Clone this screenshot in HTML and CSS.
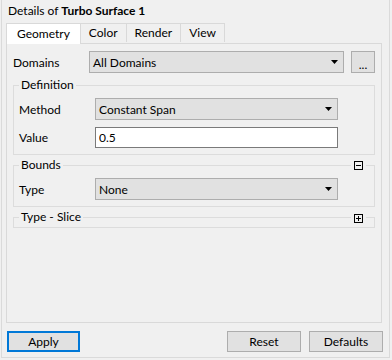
FILE: index.html
```html
<!DOCTYPE html>
<html lang="en">
<head>
    <meta charset="UTF-8">
    <meta name="viewport" content="width=device-width, initial-scale=1.0">
    <title>Details of Turbo Surface 1</title>
    <link rel="stylesheet" href="styles.css">
</head>
<body>
    <div class="details">
        <div class="details-title">Details of <b>Turbo Surface 1</b></div>

        <div class="tabs">
            <div class="tab active">Geometry</div>
            <div class="tab">Color</div>
            <div class="tab">Render</div>
            <div class="tab">View</div>
        </div>

        <div class="tab-pane">
            <div class="row">
                <span class="row-label">Domains</span>
                <div class="combo">
                    <span>All Domains</span>
                    <svg class="arrow" width="7" height="4" viewBox="0 0 7 4"><polygon points="0,0 7,0 3.5,4"/></svg>
                </div>
                <button class="btn-more">...</button>
            </div>

            <fieldset class="group">
                <legend>Definition</legend>
                <div class="row">
                    <span class="row-label">Method</span>
                    <div class="combo">
                        <span>Constant Span</span>
                        <svg class="arrow" width="7" height="4" viewBox="0 0 7 4"><polygon points="0,0 7,0 3.5,4"/></svg>
                    </div>
                </div>
                <div class="row">
                    <span class="row-label">Value</span>
                    <input class="field" type="text" value="0.5">
                </div>
            </fieldset>

            <fieldset class="group">
                <legend>Bounds</legend>
                <span class="group-toggle">
                    <svg width="9" height="9" viewBox="0 0 9 9"><rect x="0.5" y="0.5" width="8" height="8"/><line x1="2" y1="4.5" x2="7" y2="4.5"/></svg>
                </span>
                <div class="row">
                    <span class="row-label">Type</span>
                    <div class="combo">
                        <span>None</span>
                        <svg class="arrow" width="7" height="4" viewBox="0 0 7 4"><polygon points="0,0 7,0 3.5,4"/></svg>
                    </div>
                </div>
            </fieldset>

            <fieldset class="group collapsed">
                <legend>Type - Slice</legend>
                <span class="group-toggle">
                    <svg width="9" height="9" viewBox="0 0 9 9"><rect x="0.5" y="0.5" width="8" height="8"/><line x1="2" y1="4.5" x2="7" y2="4.5"/><line x1="4.5" y1="2" x2="4.5" y2="7"/></svg>
                </span>
            </fieldset>
        </div>

        <div class="actions">
            <button class="btn default">Apply</button>
            <span class="spacer"></span>
            <button class="btn">Reset</button>
            <button class="btn">Defaults</button>
        </div>
    </div>
</body>
</html>
```

FILE: styles.css
```css
* {
    box-sizing: border-box;
}
body {
    margin: 0;
    background-color: #f0f0f0;
    font-family: Lato, "Liberation Sans", sans-serif;
    font-size: 12px;
    color: #000;
}
.details {
    margin-left: 1px;
    width: 389px;
    height: 358px;
    border: 1px solid #dadada;
    border-top: none;
    padding: 0 7px 5px 4px;
    display: flex;
    flex-direction: column;
}
.details-title {
    height: 23px;
    padding: 3px 0 0 2px;
    line-height: 16px;
}
.tabs {
    display: flex;
    align-items: flex-end;
    position: relative;
    z-index: 1;
}
.tab {
    height: 19px;
    line-height: 17px;
    padding: 0 8px;
    border: 1px solid #d9d9d9;
    border-bottom: none;
    background-color: #f0f0f0;
    margin-left: -1px;
    margin-bottom: 1px;
}
.tab.active {
    height: 21px;
    line-height: 19px;
    margin-left: 0;
    margin-bottom: -1px;
    background-color: #fff;
    padding: 0 10px;
}
.tab-pane {
    flex: 1;
    border: 1px solid #d9d9d9;
    padding: 7px 6px 0;
    display: flex;
    flex-direction: column;
}
.row {
    display: flex;
    align-items: center;
}
.row + .row {
    margin-top: 7px;
}
.row-label {
    width: 76px;
    flex-shrink: 0;
}
.combo {
    flex: 1;
    height: 22px;
    border: 1px solid #adadad;
    background-color: #e1e1e1;
    padding: 0 5px 0 3px;
    display: flex;
    align-items: center;
    justify-content: space-between;
}
.arrow {
    fill: #000;
}
.field {
    flex: 1;
    height: 21px;
    border: 1px solid #7a7a7a;
    background-color: #fff;
    padding: 0 3px;
    font: inherit;
    color: #000;
    outline: none;
}
.btn-more {
    width: 24px;
    height: 22px;
    margin-left: 7px;
    border: 1px solid #adadad;
    background-color: #e1e1e1;
    font: inherit;
    line-height: 14px;
    padding: 6px 0 0;
}
.group {
    position: relative;
    margin: 4px 0 0;
    border: 1px solid #dcdcdc;
    padding: 5px 36px 6px 5px;
    min-width: 0;
}
.group + .group {
    margin-top: 2px;
}
.group legend {
    padding: 0 2px;
    line-height: 16px;
}
.group.collapsed {
    padding-top: 0;
    padding-bottom: 2px;
}
.group-toggle {
    position: absolute;
    top: -12px;
    right: 8px;
    padding: 0 3px;
    background-color: #f0f0f0;
    line-height: 0;
}
.group.collapsed .group-toggle {
    top: -11px;
}
.group-toggle svg {
    fill: none;
    stroke: #000;
    stroke-width: 1;
}
.actions {
    display: flex;
    margin: 8px -1px 0 1px;
    gap: 8px;
}
.spacer {
    flex: 1;
}
.btn {
    width: 74px;
    height: 21px;
    border: 1px solid #adadad;
    background-color: #e1e1e1;
    font: inherit;
    color: #000;
    padding: 0;
}
.btn.default {
    width: 73px;
    border: 2px solid #0078d7;
}
```
